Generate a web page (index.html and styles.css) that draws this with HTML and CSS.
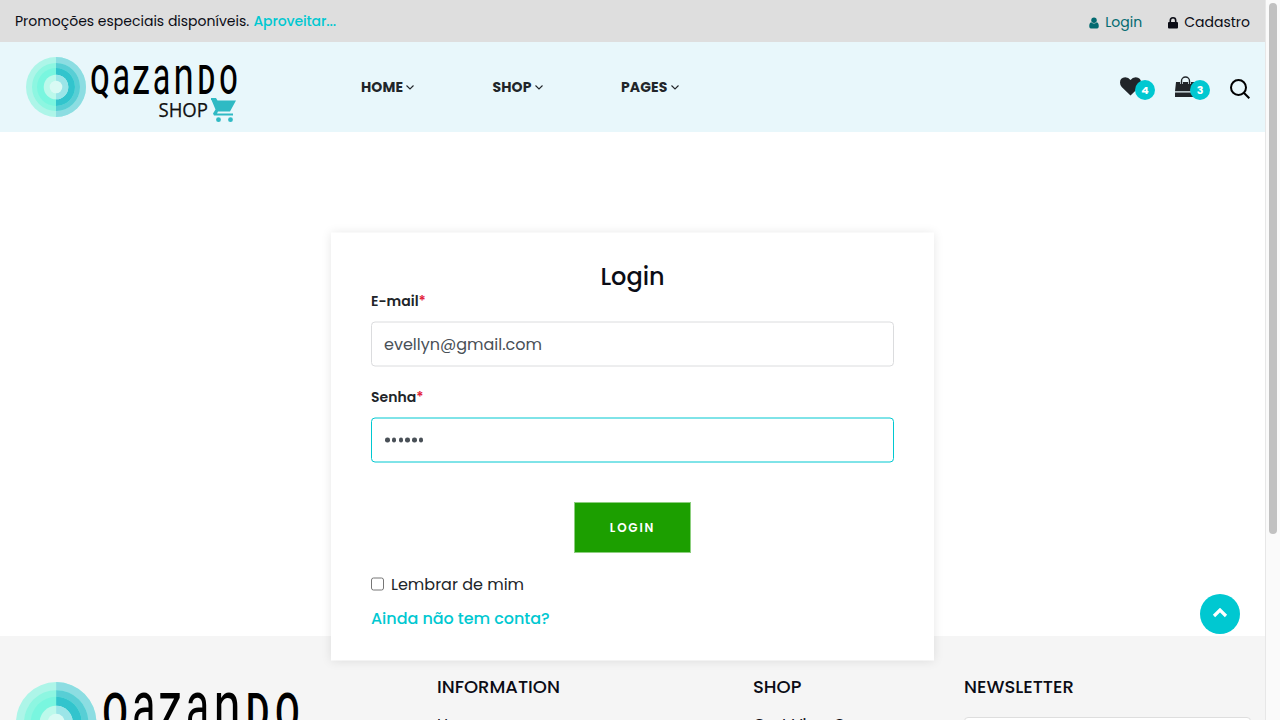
FILE: index.html
```html
<!DOCTYPE html>
<html lang="pt-BR">
<head>
<meta charset="utf-8">
<title>Qazando Shop - Login</title>
<link rel="stylesheet" href="styles.css">
</head>
<body>
<svg class="sprite" aria-hidden="true">
  <symbol id="logo" viewBox="0 0 212 67">
    <circle cx="30" cy="30" r="30" fill="#adf5e8"/>
    <path d="M30 0a30 30 0 0 1 0 60z" fill="#8cdde2"/>
    <circle cx="30" cy="30" r="24" fill="#8df6e1"/>
    <path d="M30 6a24 24 0 0 1 0 48z" fill="#58ced5"/>
    <circle cx="30" cy="30" r="19" fill="#79f6df"/>
    <path d="M30 11a19 19 0 0 1 0 38z" fill="#32c4cd"/>
    <circle cx="30" cy="30" r="12.3" fill="#bcf9eb"/>
    <path d="M30 17.700a12.300 12.300 0 0 1 0 24.600z" fill="#9be5e8"/>
    <circle cx="30" cy="30" r="6.300" fill="#d9faf4"/>
    <g class="logo-name">
      <text class="cap" transform="translate(64.300 36.500) scale(.7 1)">Q</text>
      <text class="low" transform="translate(86.500 36.500) scale(.6 1)">a</text>
      <text class="low" transform="translate(106 36.500) scale(.67 1)">z</text>
      <text class="low" transform="translate(126.800 36.500) scale(.6 1)">a</text>
      <text class="low" transform="translate(147.400 36.500) scale(.68 1)">n</text>
      <text class="cap" transform="translate(171.500 36.500) scale(.68 1)">D</text>
      <text class="cap" transform="translate(193.300 36.500) scale(.67 1)">O</text>
    </g>
    <text class="logo-shop" x="132.500" y="60" textLength="49.500" lengthAdjust="spacingAndGlyphs">SHOP</text>
    <path d="M185 41h5l1.500 2.500h18.500l-6 11h-12l-1 2h16v2h-19l-1-2 2.500-4-4-9.500H185z" fill="#2fbac4"/>
    <circle cx="192.500" cy="62.700" r="2.400" fill="#2fbac4"/>
    <circle cx="204.500" cy="62.700" r="2.400" fill="#2fbac4"/>
  </symbol>
  <symbol id="down" viewBox="0 0 8 5"><path d="M.5.5 4 4 7.500.5" fill="none" stroke="#212529" stroke-width="1.100"/></symbol>
</svg>
<div class="page">
  <div class="topbar">
    <p class="promo">Promoções especiais disponíveis. <a class="promo-link">Aproveitar...</a></p>
    <div class="account">
      <a class="account-link active"><svg width="10" height="12" viewBox="0 0 11 12"><circle cx="5.500" cy="3" r="3"/><path d="M2.500 5.300Q5.500 8 8.500 5.300 11 6 10.700 10.200 10.500 12 9 12H2Q.5 12 .3 10.200 0 6 2.500 5.300z"/></svg><span>Login</span></a>
      <a class="account-link"><svg width="10" height="12" viewBox="0 0 10 12"><rect y="5" width="10" height="6.500" rx="1"/><path d="M2.300 6V3.500a2.700 2.700 0 0 1 5.400 0V6" fill="none" stroke="currentColor" stroke-width="1.600"/></svg><span>Cadastro</span></a>
    </div>
  </div>
  <header class="header">
    <svg class="logo"><use href="#logo"/></svg>
    <nav class="nav">
      <a class="nav-item home"><span>HOME</span><svg class="down"><use href="#down"/></svg></a>
      <a class="nav-item shop"><span>SHOP</span><svg class="down"><use href="#down"/></svg></a>
      <a class="nav-item pages"><span>PAGES</span><svg class="down"><use href="#down"/></svg></a>
    </nav>
    <div class="actions">
      <a class="action"><svg width="21" height="19" viewBox="0 0 21 19"><path d="M10.500 18.500 1.700 10Q0 8.200 0 5.500 0 .5 5.300.3 8.500.3 10.500 3 12.500.3 15.700.3 21 .5 21 5.500 21 8.200 19.300 10z"/></svg><b class="badge">4</b></a>
      <a class="action bag"><svg width="21" height="22" viewBox="0 0 21 22"><path d="M1 6h19l1 9.300H0zM0 16.500h21V21H0z"/><path d="M6.500 8V5a4 4 0 0 1 8 0v3" fill="none" stroke="#e8f7fb" stroke-width="2.800"/><path d="M6.500 8V5a4 4 0 0 1 8 0v3" fill="none" stroke="#212529" stroke-width="1.400"/></svg><b class="badge">3</b></a>
      <a class="action search"><svg width="20" height="20" viewBox="0 0 20 20"><g fill="none" stroke="#000" stroke-width="2"><circle cx="8.500" cy="8.500" r="7.500"/><path d="m13.800 13.800 5.500 5.500"/></g></svg></a>
    </div>
  </header>
  <main class="main">
    <form class="card">
      <h1 class="title">Login</h1>
      <label class="label" for="email">E-mail<i>*</i></label>
      <input class="field" id="email" type="text" value="evellyn@gmail.com">
      <label class="label">Senha<i>*</i></label>
      <div class="field focus"><span class="dots"><u></u><u></u><u></u><u></u><u></u><u></u></span></div>
      <button class="submit" type="button">LOGIN</button>
      <label class="remember"><span class="box"></span><span>Lembrar de mim</span></label>
      <a class="register">Ainda não tem conta?</a>
    </form>
  </main>
  <footer class="footer">
    <div class="foot-brand"><svg class="foot-logo"><use href="#logo"/></svg></div>
    <div class="foot-col info"><h2>INFORMATION</h2><a>Home</a></div>
    <div class="foot-col fshop"><h2>SHOP</h2><a>Cart View One</a></div>
    <div class="foot-col news"><h2>NEWSLETTER</h2><div class="news-field"></div></div>
  </footer>
</div>
<div class="scroll"><div class="thumb"></div></div>
<a class="to-top"><svg width="16" height="10" viewBox="0 0 16 10"><path d="m2 8 6-6 6 6" fill="none" stroke="#fff" stroke-width="3.200"/></svg></a>
</body>
</html>
```
FILE: styles.css
```css
* { box-sizing: border-box; }
body {
  margin: 0; height: 720px; overflow: hidden; display: flex; background: #fff;
  font-family: Poppins, Inter, "Open Sans", sans-serif;
  color: #212529; font-size: 16px;
}
h1, h2, p { margin: 0; font-weight: 500; }
svg { display: block; flex: none; fill: currentColor; }
.sprite { position: absolute; width: 0; height: 0; }
.page { width: 1265px; height: 720px; overflow: hidden; }
.topbar {
  height: 42px; background: #dedede; padding: 0 15px;
  display: flex; align-items: center; justify-content: space-between;
  font-size: 14px; color: #0b0c15; white-space: nowrap;
}
.promo { font-size: 14px; font-weight: 400; }
.promo-link { color: #00c8d1; font-weight: 500; letter-spacing: -.12px; margin-left: .5px; }
.account { display: flex; gap: 26px; padding-top: 3px; }
.account-link { display: flex; align-items: center; gap: 6px; }
.active { color: #026a70; }
.active span { margin-left: .5px; }
.header { height: 90px; background: #e8f7fb; display: flex; padding: 0 15px 0 26px; }
.logo { width: 212px; height: 67px; margin-top: 15px; }
.logo-name { font-family: Roboto, sans-serif; fill: #000; }
.cap { font-size: 40px; font-weight: 500; }
.low { font-size: 54px; font-weight: 400; }
.logo-shop { font-family: "Open Sans", sans-serif; font-size: 20px; fill: #111; stroke: #111; stroke-width: .25px; }
.nav { display: flex; align-items: center; margin-left: 123px; font-size: 14px; font-weight: 700; letter-spacing: .1px; }
.nav-item { display: flex; align-items: center; gap: 3px; }
.home { width: 131.5px; }
.shop { width: 128.5px; }
.shop .down, .pages .down { margin-left: .6px; }
.down { width: 8px; height: 5px; margin-top: 1px; }
.actions { display: flex; margin-left: auto; padding-top: 34px; }
.action { position: relative; width: 55px; height: 24px; padding-top: 1px; }
.bag { padding-top: 0; }
.search { width: 20px; padding-top: 3px; }
.badge {
  position: absolute; left: 15px; top: 4px; width: 20px; height: 20px; border-radius: 50%;
  background: #00c8d1; color: #fff; font-size: 11px; line-height: 20px; text-align: center;
}
.main { height: 504px; padding-top: 100px; }
.card {
  position: relative; width: 603px; height: 428px; margin: 0 auto; padding: 29px 40px;
  background: #fff; box-shadow: 0 0 10px rgba(0,0,0,.1);
  display: flex; flex-direction: column; transform: translateY(.5px);
}
.title { font-size: 24px; line-height: 30px; text-align: center; color: #0b0c15; margin-bottom: -1px; }
.label { font-size: 14px; line-height: 20px; font-weight: 600; margin-bottom: 11px; }
.label i { font-style: normal; color: #e3243b; }
.field {
  width: 523px; height: 45px; border: 1px solid #dbdcde; border-radius: 4px; outline: 0;
  padding: 0 12px; background: #fff; color: #495057; font: inherit;
  display: flex; align-items: center; margin: 0 0 20px;
}
.focus { border-color: #00c8d1; margin-bottom: 40px; }
.dots { display: flex; gap: 2.2px; padding-left: 1.3px; }
.dots u { width: 4.5px; height: 4.5px; border-radius: 50%; background: #495057; }
.submit {
  align-self: center; width: 117px; height: 50px; flex: none; padding: 0; background: #1c9f00;
  border: solid #8ccf7e; border-width: 0 1px; color: #fff; font: inherit; font-size: 12px; font-weight: 600; letter-spacing: 1.8px;
}
.remember { display: flex; align-items: center; gap: 7px; height: 24px; margin-top: 19px; }
.box { width: 13px; height: 13px; border: 1px solid #767676; border-radius: 2.5px; }
.register { color: #00c8d1; font-weight: 500; line-height: 24px; margin-top: 11px; letter-spacing: -.04px; }
.footer { height: 84px; background: #f5f5f5; display: flex; padding-left: 16px; }
.foot-brand { width: 421px; }
.foot-logo { width: 284px; height: 90px; margin-top: 46px; }
.foot-col { padding-top: 40px; color: #0b0c15; white-space: nowrap; }
.foot-col h2 { font-size: 18px; line-height: 22px; margin-bottom: 15px; }
.foot-col a { display: block; font-size: 16px; line-height: 24px; letter-spacing: -.1px; }
.info { width: 316px; }
.fshop { width: 211px; }
.news-field { width: 287px; height: 46px; margin-top: 19px; border: 1px solid #dedede; border-radius: 4px; background: #fff; }
.scroll { width: 15px; height: 720px; background: #fafafa; border-left: 1px solid #e7e7e7; padding: 3px 0 0 3px; }
.thumb { width: 8px; height: 531px; border-radius: 4px; background: #c1c1c1; }
.to-top {
  position: absolute; left: 1200px; top: 594px; width: 40px; height: 40px; border-radius: 50%;
  background: #00c8d1; display: grid; place-items: center; padding-bottom: 3px;
}
```
